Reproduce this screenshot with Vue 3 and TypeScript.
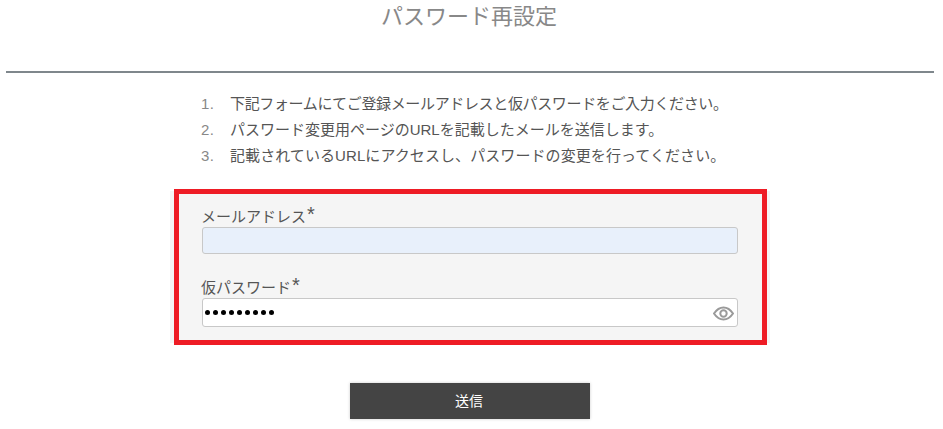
<script setup lang="ts">
const steps: string[] = [
  '下記フォームにてご登録メールアドレスと仮パスワードをご入力ください。',
  'パスワード変更用ページのURLを記載したメールを送信します。',
  '記載されているURLにアクセスし、パスワードの変更を行ってください。',
]
</script>

<template>
  <div class="page">
    <h1 class="title">パスワード再設定</h1>
    <hr class="rule" />
    <ol class="steps">
      <li v-for="s in steps" :key="s"><span class="txt">{{ s }}</span></li>
    </ol>
    <form class="panel" @submit.prevent>
      <div class="highlight"></div>
      <div class="field">
        <label class="label">メールアドレス<span class="req">*</span></label>
        <div class="input auto"></div>
      </div>
      <div class="field second">
        <label class="label">仮パスワード<span class="req">*</span></label>
        <div class="input">
          <span class="dots"><i v-for="n in 9" :key="n"></i></span>
          <svg class="eye" width="21" height="15" viewBox="0 0 21 15" fill="none" stroke="#9a9a9a">
            <path d="M1 7.5C3.7 3.5 6.8 1.5 10.5 1.5s6.800 2 9.500 6c-2.700 4-5.800 6-9.500 6S3.700 11.500 1 7.500Z" stroke-width="2" />
            <circle cx="10.500" cy="7.500" r="3.200" stroke-width="2" />
          </svg>
        </div>
      </div>
    </form>
    <div class="actions">
      <button class="send" type="button">送信</button>
    </div>
  </div>
</template>

<style>
html, body { margin: 0; background: #fff; }
</style>

<style scoped>
.page {
  width: 943px;
  height: 429px;
  overflow: hidden;
  box-sizing: border-box;
  padding: 0 9px 0 6px;
  font-family: "Liberation Sans", "Noto Sans CJK JP", sans-serif;
  color: #555;
}
.title {
  margin: 0;
  height: 71px;
  box-sizing: border-box;
  padding: 2px 2px 0 0;
  text-align: center;
  font-size: 22px;
  line-height: 30px;
  font-weight: 400;
  color: #888;
}
.rule {
  margin: 0;
  height: 2px;
  border: 0;
  background: #7f878c;
}
.steps {
  margin: 18px 0 0 192px;
  padding: 0;
  list-style: none;
  counter-reset: s;
  font-size: 15px;
  line-height: 26px;
}
.steps li {
  counter-increment: s;
  display: flex;
  height: 26px;
  white-space: nowrap;
}
.steps li:nth-child(1) .txt { letter-spacing: -0.35px; }
.steps li:nth-child(3) .txt { letter-spacing: 0.08px; }
.steps li::before {
  content: counter(s) ".";
  width: 32px;
  padding-left: 3px;
  box-sizing: border-box;
  letter-spacing: 0.5px;
  color: #888;
}
.txt { color: #555; }
.panel {
  position: relative;
  box-sizing: border-box;
  width: 600px;
  height: 152px;
  margin: 22px 0 0 164px;
  padding: 15px 0 0 32px;
  background: #f5f5f5;
}
.highlight {
  position: absolute;
  top: -2px;
  bottom: -2px;
  left: 4px;
  right: 3px;
  border: 5px solid #ee1c25;
  pointer-events: none;
}
.label {
  display: block;
  font-size: 15px;
  line-height: 21px;
  color: #555;
  text-indent: -1px;
}
.req {
  font-size: 20px;
  line-height: 0;
  position: relative;
  top: -1px;
  margin-left: 1px;
}
.input {
  box-sizing: border-box;
  width: 536px;
  height: 27px;
  background: #fff;
  border: 1px solid #c8c8c8;
  border-radius: 3px;
  display: flex;
  align-items: center;
  justify-content: space-between;
  padding: 0 3px 0 2px;
}
.auto { background: #e8f0fb; }
.second { margin-top: 23px; }
.second .input { height: 29px; }
.dots { display: flex; gap: 3px; }
.dots i {
  width: 5px;
  height: 5px;
  border-radius: 50%;
  background: #000;
}
.eye { display: block; margin-top: 2px; }
.actions {
  display: flex;
  margin: 40px 0 0 344px;
}
.send {
  width: 240px;
  height: 36px;
  border: 0;
  padding: 0 2px 2px 0;
  background: #444;
  color: #fff;
  font-family: inherit;
  font-size: 14px;
  box-shadow: 0 0 3px rgba(0, 0, 0, .2);
}
</style>
